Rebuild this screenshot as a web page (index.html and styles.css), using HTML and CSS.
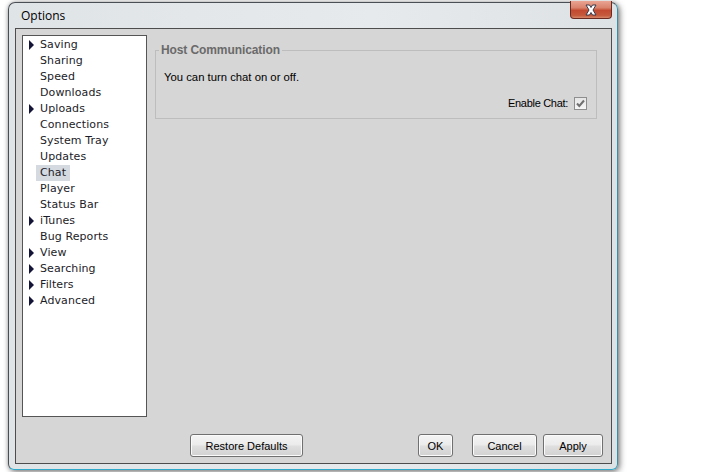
FILE: index.html
```html
<!DOCTYPE html>
<html>
<head>
<meta charset="utf-8">
<link rel="stylesheet" href="styles.css">
</head>
<body>
<div class="window">
  <div class="titlebar">
    <span class="title">Options</span>
    <div class="close">
      <svg width="18" height="12" viewBox="0 0 18 12">
        <path d="M4 1 L7.5 1 L9 3.5 L10.5 1 L14 1 L11 6 L14 11 L10.5 11 L9 8.5 L7.5 11 L4 11 L7 6 Z" fill="#ffffff" stroke="#3a3a4a" stroke-width="1" stroke-linejoin="round"/>
      </svg>
    </div>
  </div>
  <div class="client">
    <div class="main">
      <div class="tree">
        <div class="row"><span class="arrow"></span><span class="label">Saving</span></div>
        <div class="row"><span class="label">Sharing</span></div>
        <div class="row"><span class="label">Speed</span></div>
        <div class="row"><span class="label">Downloads</span></div>
        <div class="row"><span class="arrow"></span><span class="label">Uploads</span></div>
        <div class="row"><span class="label">Connections</span></div>
        <div class="row"><span class="label">System Tray</span></div>
        <div class="row"><span class="label">Updates</span></div>
        <div class="row"><span class="label selected">Chat</span></div>
        <div class="row"><span class="label">Player</span></div>
        <div class="row"><span class="label">Status Bar</span></div>
        <div class="row"><span class="arrow"></span><span class="label">iTunes</span></div>
        <div class="row"><span class="label">Bug Reports</span></div>
        <div class="row"><span class="arrow"></span><span class="label">View</span></div>
        <div class="row"><span class="arrow"></span><span class="label">Searching</span></div>
        <div class="row"><span class="arrow"></span><span class="label">Filters</span></div>
        <div class="row"><span class="arrow"></span><span class="label">Advanced</span></div>
      </div>
      <div class="pane">
        <fieldset class="group">
          <legend class="legend">Host Communication</legend>
          <div class="desc">You can turn chat on or off.</div>
          <div class="option">
            <span class="opt-label">Enable Chat:</span>
            <span class="checkbox">
              <svg width="11" height="11" viewBox="0 0 11 11">
                <path d="M2 5.5 L4.3 8 L9 2.5" fill="none" stroke="#707070" stroke-width="2"/>
              </svg>
            </span>
          </div>
        </fieldset>
      </div>
    </div>
    <div class="buttons">
      <button class="btn restore">Restore Defaults</button>
      <div class="spacer"></div>
      <button class="btn ok">OK</button>
      <button class="btn cancel">Cancel</button>
      <button class="btn apply">Apply</button>
    </div>
  </div>
</div>
</body>
</html>
```

FILE: styles.css
```css
html, body {
  margin: 0;
  padding: 0;
  background: #ffffff;
  width: 720px;
  height: 472px;
  overflow: hidden;
}

.window {
  margin: 2px 0 0 8px;
  width: 608px;
  height: 466px;
  border: 1px solid #4a4f55;
  border-bottom-color: #2fa9c9;
  border-right-color: #3a8fa8;
  border-radius: 7px 7px 6px 6px;
  background: linear-gradient(to right, #dfe4e7 0%, #e7eaec 60%, #dde2e5 100%);
  box-shadow: 2px 2px 6px rgba(0,0,0,0.45), 0 0 4px rgba(0,0,0,0.25);
  display: flex;
  flex-direction: column;
  box-sizing: content-box;
}

.titlebar {
  height: 25px;
  display: flex;
  align-items: flex-start;
  position: relative;
}

.title {
  font-family: "Open Sans", "Liberation Sans", sans-serif;
  font-size: 12px;
  color: #000000;
  margin: 5px 0 0 12px;
  line-height: 16px;
}

.close {
  position: absolute;
  top: -2px;
  right: 5px;
  width: 42px;
  height: 18px;
  box-sizing: border-box;
  border: 1px solid #6b2a20;
  border-top: none;
  border-radius: 0 0 4px 4px;
  background: linear-gradient(to bottom, #e9a492 0%, #d9826c 40%, #c24a30 55%, #c65a3c 85%, #d6866a 100%);
  display: flex;
  align-items: center;
  justify-content: center;
}

.client {
  margin: 0 5px 5px 6px;
  flex: 1;
  border: 1px solid #4d4d4d;
  background: #d6d6d6;
  display: flex;
  flex-direction: column;
}

.main {
  display: flex;
  padding: 6px 0 0 6px;
}

.tree {
  width: 123px;
  height: 379px;
  padding-top: 1px;
  border: 1px solid #555555;
  background: #ffffff;
  font-family: "DejaVu Sans", Verdana, sans-serif;
  font-size: 11px;
  color: #1c1c28;
  flex: none;
}

.row {
  height: 16px;
  display: flex;
  align-items: center;
  position: relative;
  padding-left: 13px;
}

.arrow {
  position: absolute;
  left: 6px;
  top: 3px;
  width: 0;
  height: 0;
  border-top: 5px solid transparent;
  border-bottom: 5px solid transparent;
  border-left: 5px solid #141438;
}

.label {
  padding: 0 4px;
  line-height: 16px;
  letter-spacing: 0.1px;
}

.label.selected {
  background: #d5d9e0;
}

.pane {
  flex: 1;
  padding: 8px 14px 0 8px;
}

.group {
  margin: 0;
  border: 1px solid #bdbdbd;
  padding: 0 9px 10px 8px;
  height: 64px;
  box-sizing: content-box;
  font-family: "Liberation Sans", Arial, sans-serif;
  font-size: 11px;
}

.legend {
  padding: 0 2px;
  margin-left: -5px;
  font-weight: bold;
  color: #6a6a6a;
  font-size: 12px;
  line-height: 14px;
  letter-spacing: -0.1px;
}

.desc {
  color: #000000;
  margin-top: 13px;
  line-height: 14px;
  font-size: 11.3px;
}

.option {
  display: flex;
  justify-content: flex-end;
  align-items: center;
  margin-top: 12px;
  gap: 6px;
  color: #000000;
}

.opt-label {
  line-height: 14px;
  letter-spacing: -0.3px;
}

.checkbox {
  width: 11px;
  height: 11px;
  border: 1px solid #8e8e8e;
  background: linear-gradient(to bottom, #e6e6e6, #f6f6f6);
  display: flex;
}

.buttons {
  display: flex;
  align-items: center;
  margin-top: 17px;
  padding: 0 8px 0 174px;
}

.spacer {
  flex: 1;
}

.btn {
  height: 23px;
  box-sizing: border-box;
  border: 1px solid #707070;
  border-radius: 3px;
  background: linear-gradient(to bottom, #f4f4f4 0%, #ececec 45%, #dedede 55%, #d2d2d2 100%);
  box-shadow: inset 0 0 0 1px #fbfbfb;
  font-family: "Liberation Sans", Arial, sans-serif;
  font-size: 11px;
  color: #000000;
  padding: 0;
}

.restore { width: 113px; }
.ok { width: 35px; }
.cancel { width: 65px; margin-left: 19px; }
.apply { width: 60px; margin-left: 6px; }
```
